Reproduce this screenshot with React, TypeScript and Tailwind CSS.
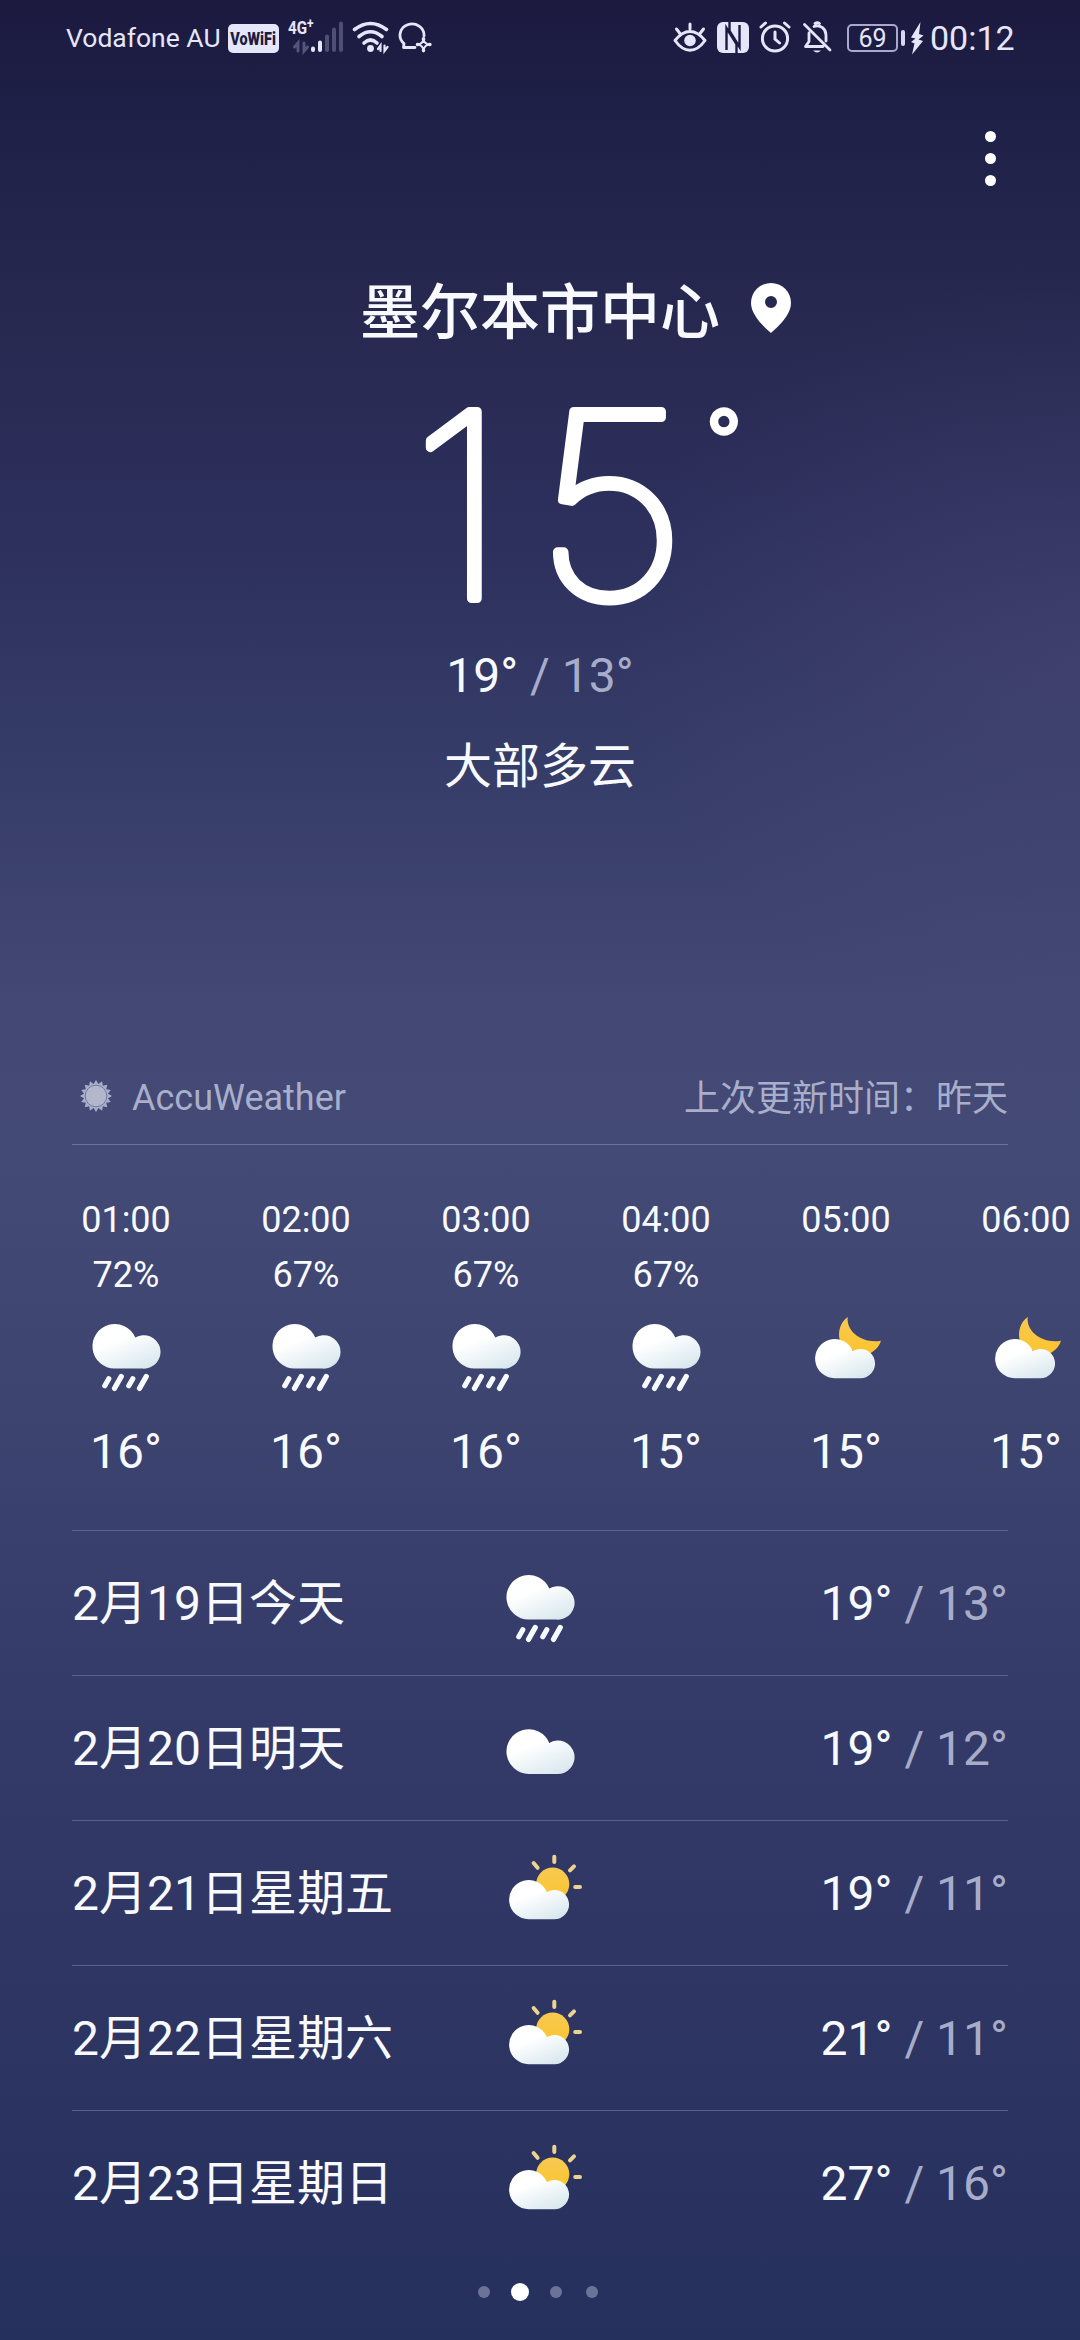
import React from "react";

type WeatherKind = "rain" | "cloud" | "sun" | "moon";

const hours: { time: string; chance: string; kind: WeatherKind; temp: number }[] = [
  { time: "01:00", chance: "72%", kind: "rain", temp: 16 },
  { time: "02:00", chance: "67%", kind: "rain", temp: 16 },
  { time: "03:00", chance: "67%", kind: "rain", temp: 16 },
  { time: "04:00", chance: "67%", kind: "rain", temp: 15 },
  { time: "05:00", chance: "", kind: "moon", temp: 15 },
  { time: "06:00", chance: "", kind: "moon", temp: 15 },
];

const days: { date: string; kind: WeatherKind; high: number; low: number }[] = [
  { date: "2月19日今天", kind: "rain", high: 19, low: 13 },
  { date: "2月20日明天", kind: "cloud", high: 19, low: 12 },
  { date: "2月21日星期五", kind: "sun", high: 19, low: 11 },
  { date: "2月22日星期六", kind: "sun", high: 21, low: 11 },
  { date: "2月23日星期日", kind: "sun", high: 27, low: 16 },
];

const CLOUD =
  "M36.7 64.6a22.3 22.3 0 1 1 20.6-31a16.7 16.7 0 1 1 7.4 31z";

function WeatherIcon({ kind }: { kind: WeatherKind }) {
  const small = kind === "sun" || kind === "moon";
  const place = small
    ? "translate(4.4 17.4) scale(0.88)"
    : kind === "cloud"
      ? "translate(0 9.3)"
      : undefined;

  return (
    <svg viewBox="0 0 96 96" className="size-24 shrink-0">
      <defs>
        <linearGradient id="cloudFill" x1="0.2" y1="0.1" x2="0.75" y2="1">
          <stop offset="0.3" stopColor="#ffffff" />
          <stop offset="1" stopColor="#d9e8ee" />
        </linearGradient>
        <linearGradient id="sunFill" x1="0" y1="0" x2="0" y2="1">
          <stop offset="0" stopColor="#f6c951" />
          <stop offset="1" stopColor="#fdc42c" />
        </linearGradient>
      </defs>
      {kind === "sun" && (
        <>
          <circle cx="60.7" cy="39.2" r="16.6" fill="url(#sunFill)" />
          <path
            d="M62.3 11.8V17M41.6 18l4 4.8M82 21.4l-4 4M83.2 42h4.8"
            stroke="#ecd38f"
            strokeWidth="4"
            strokeLinecap="round"
          />
        </>
      )}
      {kind === "moon" && (
        <path
          d="M49.7 13C42 18.5 39.5 28 42 37L60 50.5L70 50C76 48 81 43 83 36.7C65 40 48 28 49.7 13z"
          fill="url(#sunFill)"
        />
      )}
      <path d={CLOUD} transform={place} fill="url(#cloudFill)" />
      {kind === "rain" && (
        <path
          d="M30.8 74.8l-4 7M43.3 72.4l-6.8 12M54.8 74.8l-4 7M68.3 72.4l-6.8 12"
          stroke="#f7fbff"
          strokeWidth="5.2"
          strokeLinecap="round"
        />
      )}
    </svg>
  );
}

function Range({ high, low }: { high: number; low: number }) {
  return (
    <p className="text-5xl leading-12 whitespace-pre">
      {high}° <span className="text-[#a7acc9]">/ {low}°</span>
    </p>
  );
}

function StatusBar() {
  return (
    <div className="flex h-[76px] items-center pl-[66px] text-[#e6e6fa]">
      <span className="w-[162px] text-[26.5px] leading-[26px] whitespace-nowrap">Vodafone AU</span>
      <span className="flex h-[29px] w-[51px] items-center justify-center rounded-[5px] bg-[#e6e6fa] text-[#1c1b40]">
        <span className="scale-x-[0.76] text-[19px] font-black leading-none">VoWiFi</span>
      </span>
      {/* mobile signal */}
      <div className="relative ml-[9px] h-10 w-14">
        <span className="absolute top-[2px] left-0 origin-left scale-x-[0.8] text-[19px] font-bold leading-[16px]">
          4G<sup className="-top-[6px] text-[15px]">+</sup>
        </span>
        <svg viewBox="0 0 56 40" className="h-10 w-14" fill="none" strokeLinecap="round">
          <path d="M10 33V25L6.5 29M16 25v8l3.5-4" stroke="#55557a" strokeWidth="3" />
          <path d="M25 30.5V32M32 24.5v7.5" stroke="#e6e6fa" strokeWidth="4" />
          <path d="M39 18.5V32M46 11.5V32M53 5.5V32" stroke="#4f4e74" strokeWidth="4" />
        </svg>
      </div>
      {/* wifi */}
      <svg viewBox="0 0 38 40" className="ml-[8px] h-10 w-[38px]" fill="none" stroke="currentColor" strokeLinecap="round">
        <path d="M2.5 11.5Q18.5 -0.5 34.5 11.5" strokeWidth="3.6" />
        <path d="M7 18.5Q18.5 9 30 18.5" strokeWidth="3.6" />
        <path d="M12 25Q18.5 19 25 25" strokeWidth="3.6" />
        <circle cx="18.5" cy="30.5" r="3.4" fill="currentColor" stroke="none" />
        <path d="M28.5 33v-5.5L26 31M32.5 27.5V33l3-4" strokeWidth="2.2" />
      </svg>
      {/* chat bubble with link mark */}
      <svg viewBox="0 0 34 40" className="ml-[8px] h-10 w-[34px]" fill="none" stroke="currentColor" strokeWidth="2.8" strokeLinecap="round" strokeLinejoin="round">
        <path d="M17 29.5H5.5L6 25.5A12 11.2 0 1 1 26 18" />
        <path d="M25.5 21.5q.8 4 5.5 5q-4.7 1-5.5 5.5q-.8-4.5-5.5-5.5q4.7-1 5.5-5z" strokeWidth="2" />
        <path d="M25.5 20.8v.4M31.5 26.5h.4M25.5 32.4v.2M19.5 26.5h.4" strokeWidth="3.6" />
      </svg>

      <div className="ml-[241px] flex items-center">
        {/* eye comfort */}
        <svg viewBox="0 0 34 40" className="h-10 w-[34px]" fill="none" stroke="currentColor" strokeLinecap="round">
          <path d="M2 22.5Q9 13.5 17 13.5T32 22.5Q25 32.3 17 32.3T2 22.5z" strokeWidth="3" strokeLinejoin="round" />
          <circle cx="17" cy="22.5" r="5.8" fill="currentColor" stroke="none" />
          <path d="M17 6v5M3.5 11l3.5 4.5M30.5 11L27 15.5" strokeWidth="3" />
        </svg>
        {/* NFC */}
        <svg viewBox="0 0 32 40" className="ml-[10px] h-10 w-8">
          <rect y="4" width="32" height="31" rx="6" fill="currentColor" />
          <path d="M9.5 32V10L19.5 26V35M22.5 7V29L12.5 13V4" stroke="#1d1b42" strokeWidth="2.4" fill="none" />
        </svg>
        {/* alarm */}
        <svg viewBox="0 0 32 40" className="ml-[10px] h-10 w-8" fill="none" stroke="currentColor" strokeWidth="3" strokeLinecap="round">
          <circle cx="16" cy="20.5" r="12.6" />
          <path d="M16 14v7l4.5 4M2 9l4.5-4M30 9l-4.5-4" />
        </svg>
        {/* muted bell */}
        <svg viewBox="0 0 30 40" className="ml-[11px] h-10 w-[30px]" fill="none" stroke="currentColor" strokeWidth="2.8" strokeLinecap="round" strokeLinejoin="round">
          <path d="M2.5 6.5l25.5 25.5M7 15v8.5L3.5 28.5H21" />
          <path d="M12 8.5q4.5-1.7 8.5 1.2Q24 12.5 24 17v6M13 5.5q2.5-1.5 4.5 0" />
          <path d="M11 32.5h8q-4 4-8 0z" fill="currentColor" stroke="none" />
        </svg>
        <div className="ml-[15px] flex h-[28px] w-[51px] items-center justify-center rounded-[5px] border-2 border-[#aaa8cc]">
          <span className="text-[25px] leading-none">69</span>
        </div>
        <div className="ml-[3px] h-4 w-1 rounded-full bg-[#d8d7ee]" />
        <svg viewBox="0 0 14 40" className="ml-[5px] h-10 w-3.5" fill="currentColor">
          <path d="M10.5 4L1 19.5l4.5 1-4.5 3.5 3.5 1.5L2 36.5 13 23l-4.5-1.5L13.5 17.5 9 16z" />
        </svg>
        <span className="ml-[6px] text-[34px] leading-[34px]">00:12</span>
      </div>
    </div>
  );
}

function CurrentWeather() {
  return (
    <section className="flex flex-col items-center">
      <div className="grid h-[60px] w-full grid-cols-[1fr_auto_1fr] items-center">
        <span />
        <h1 className="pt-0.5 text-[60px] leading-[60px] font-medium">墨尔本市中心</h1>
        <svg viewBox="0 0 40 50" className="mb-[10px] ml-[31px] h-[50px] w-10">
          <path
            d="M20 0A20 20 0 0 1 40 20C40 32 27 44 20 50C13 44 0 32 0 20A20 20 0 0 1 20 0zM20 13a6 6 0 1 0 0 12a6 6 0 1 0 0-12z"
            fill="#fff"
            fillRule="evenodd"
          />
        </svg>
      </div>
      {/* the round joins soften the corners of the thin numerals */}
      <svg
        viewBox="0 0 1080 310"
        className="h-[310px] w-full overflow-visible fill-white stroke-white font-['Inter'] text-[257px] font-thin"
        strokeLinejoin="round"
        strokeWidth="9"
      >
        <text x="412" y="256.5">1</text>
        <text transform="translate(535 256.5) scale(1.05 1)">5</text>
        <text x="724" y="141" textAnchor="middle" strokeWidth="1.5" className="font-['Roboto'] text-[104px] font-medium">
          °
        </text>
      </svg>
      <Range high={19} low={13} />
      <p className="mt-[43px] text-5xl leading-12">大部多云</p>
    </section>
  );
}

function SourceRow() {
  return (
    <div className="mx-[72px] mt-[289px] flex h-[65px] justify-between border-b border-[#6e7399] text-4xl leading-9 text-[#a9aeca]">
      <div className="flex">
        <svg viewBox="-16 -16 32 32" className="mr-5 ml-2 size-8">
          {Array.from({ length: 16 }, (_, i) => (
            <path key={i} d="M-3 -11L0 -16L3 -11z" transform={`rotate(${i * 22.5})`} fill="#a9aeca" />
          ))}
          <circle r="12" fill="#a9aeca" />
          <circle r="10.8" fill="#b4b6cb" stroke="#747a9f" strokeWidth="1" />
        </svg>
        <span>AccuWeather</span>
      </div>
      <span className="pt-px">上次更新时间：昨天</span>
    </div>
  );
}

function App() {
  return (
    <main className="relative h-[2340px] w-[1080px] overflow-hidden bg-[linear-gradient(#1c193f_0px,#1e2047_110px,#26284f_300px,#2e315e_560px,#353b67_740px,#434974_1010px,#434a75_1150px,#3d4470_1400px,#353b69_1690px,#2f3664_1950px,#26305d_2340px)] font-['Roboto','Noto_Sans_CJK_SC',sans-serif] text-[#f8faff]">
      <div className="absolute inset-0 bg-[radial-gradient(ellipse_460px_380px_at_1080px_650px,rgba(98,88,138,0.27),rgba(98,88,138,0)_100%)]" />
      <div className="relative">
        <StatusBar />
        <div className="flex h-[206px] justify-end pt-[55px] pr-[84px]">
          <button className="flex h-[55px] w-[11px] flex-col justify-between">
            <i className="size-[11px] rounded-full bg-white" />
            <i className="size-[11px] rounded-full bg-white" />
            <i className="size-[11px] rounded-full bg-white" />
          </button>
        </div>
        <CurrentWeather />
        <SourceRow />

        <div className="flex h-[385px] gap-[72px] overflow-hidden pt-[57px] pl-[72px]">
          {hours.map((hour) => (
            <div key={hour.time} className="flex w-[108px] shrink-0 flex-col items-center">
              <p className="text-4xl leading-9">{hour.time}</p>
              <p className="mt-[19px] mb-[11px] h-9 text-4xl leading-9">{hour.chance}</p>
              <WeatherIcon kind={hour.kind} />
              <p className="mt-7 text-5xl leading-12">{hour.temp}°</p>
            </div>
          ))}
        </div>

        <ul className="px-[72px]">
          {days.map((day) => (
            <li
              key={day.date}
              className="grid h-[145px] grid-cols-[1fr_96px_1fr] items-center border-t border-[#5b618b]"
            >
              <p className="pt-0.5 text-5xl leading-12 whitespace-nowrap">{day.date}</p>
              <WeatherIcon kind={day.kind} />
              <div className="justify-self-end pt-0.5">
                <Range high={day.high} low={day.low} />
              </div>
            </li>
          ))}
        </ul>

        <div className="mt-7 flex h-[18px] items-center pl-[478px]">
          <i className="size-3 rounded-full bg-[#6b7398]" />
          <i className="mx-[21px] size-[18px] rounded-full bg-white" />
          <i className="size-3 rounded-full bg-[#6b7398]" />
          <i className="ml-6 size-3 rounded-full bg-[#6b7398]" />
        </div>
      </div>
    </main>
  );
}

export default App;
